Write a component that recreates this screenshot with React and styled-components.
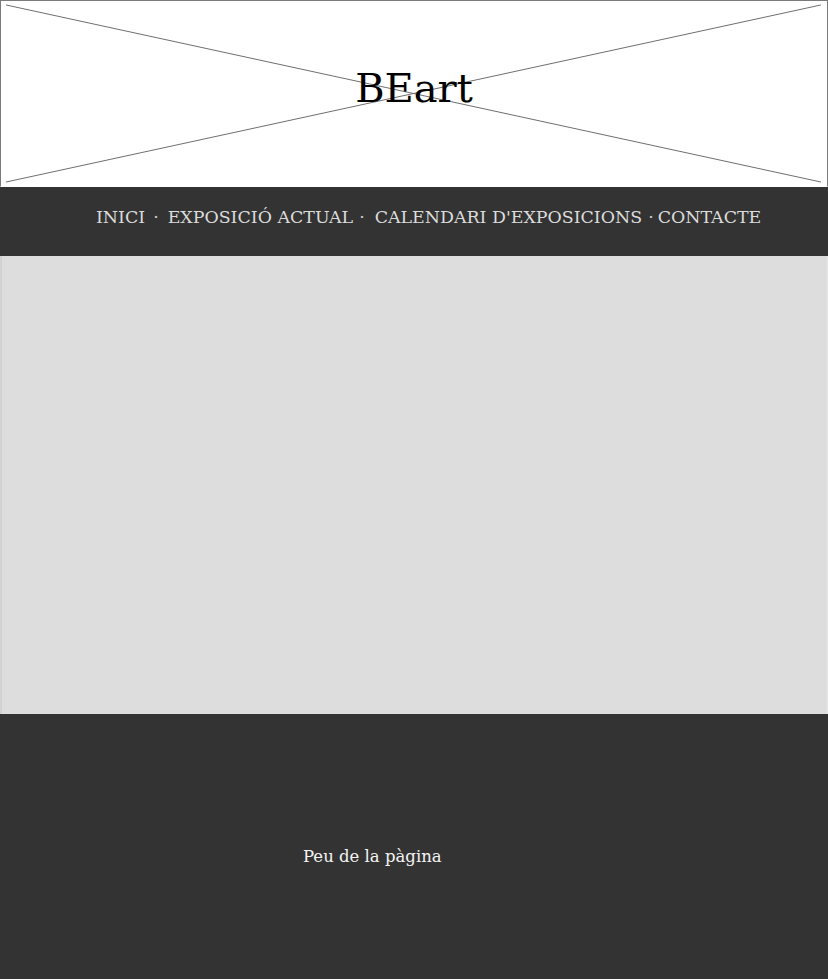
import React from "react";
import styled, { createGlobalStyle } from "styled-components";

const Global = createGlobalStyle`
  html, body { margin: 0; padding: 0; background: #ffffff; }
  body { font-family: "DejaVu Serif", "Liberation Serif", serif; }
  * { box-sizing: border-box; }
`;

const Page = styled.div`
  width: 828px;
  display: flex;
  flex-direction: column;
`;

const Header = styled.header`
  position: relative;
  height: 187px;
  border: 1px solid #7a7a7a;
  border-bottom-color: #ffffff;
  background: #ffffff;
  display: flex;
  align-items: center;
  justify-content: center;
`;

const Cross = styled.svg`
  position: absolute;
  inset: 0;
  width: 100%;
  height: 100%;
`;

const Logo = styled.h1`
  position: relative;
  margin: 0;
  font-family: "DejaVu Serif", serif;
  font-weight: normal;
  font-size: 40px;
  line-height: 1;
  color: #000;
  padding-bottom: 12px;
`;

const Nav = styled.nav`
  height: 69px;
  background: #333333;
  display: flex;
  align-items: center;
  padding-left: 96px;
  padding-bottom: 10px;
`;

const NavItem = styled.a`
  font-family: "DejaVu Serif", serif;
  font-size: 17.4px;
  color: #dcdcdc;
  text-decoration: none;
  white-space: nowrap;
`;

const Sep = styled.span`
  font-family: "DejaVu Serif", serif;
  font-size: 17.4px;
  color: #cfcfcf;
  margin: 0 ${(p) => p.$r}px 0 ${(p) => p.$l}px;
`;

const Main = styled.main`
  height: 458px;
  background: #dddddd;
  border-left: 2px solid #d2d2d2;
  border-right: 1px solid #e8e8e8;
`;

const Footer = styled.footer`
  height: 265px;
  background: #333333;
  display: flex;
  align-items: center;
  padding-left: 303px;
  padding-top: 20px;
`;

const FootText = styled.p`
  margin: 0;
  font-family: "DejaVu Serif", serif;
  font-size: 16.5px;
  color: #f4f4f4;
`;

export default function App() {
  return (
    <Page>
      <Global />
      <Header>
        <Cross viewBox="0 0 828 187" preserveAspectRatio="none">
          <line x1="5" y1="4" x2="822" y2="183" stroke="#6e6e6e" strokeWidth="1" />
          <line x1="5" y1="183" x2="822" y2="4" stroke="#6e6e6e" strokeWidth="1" />
        </Cross>
        <Logo>BEart</Logo>
      </Header>
      <Nav>
        <NavItem href="#">INICI</NavItem>
        <Sep $l={8} $r={9}>·</Sep>
        <NavItem href="#">EXPOSICIÓ ACTUAL</NavItem>
        <Sep $l={6} $r={10}>·</Sep>
        <NavItem href="#">CALENDARI D'EXPOSICIONS</NavItem>
        <Sep $l={6} $r={4}>·</Sep>
        <NavItem href="#">CONTACTE</NavItem>
      </Nav>
      <Main />
      <Footer>
        <FootText>Peu de la pàgina</FootText>
      </Footer>
    </Page>
  );
}
